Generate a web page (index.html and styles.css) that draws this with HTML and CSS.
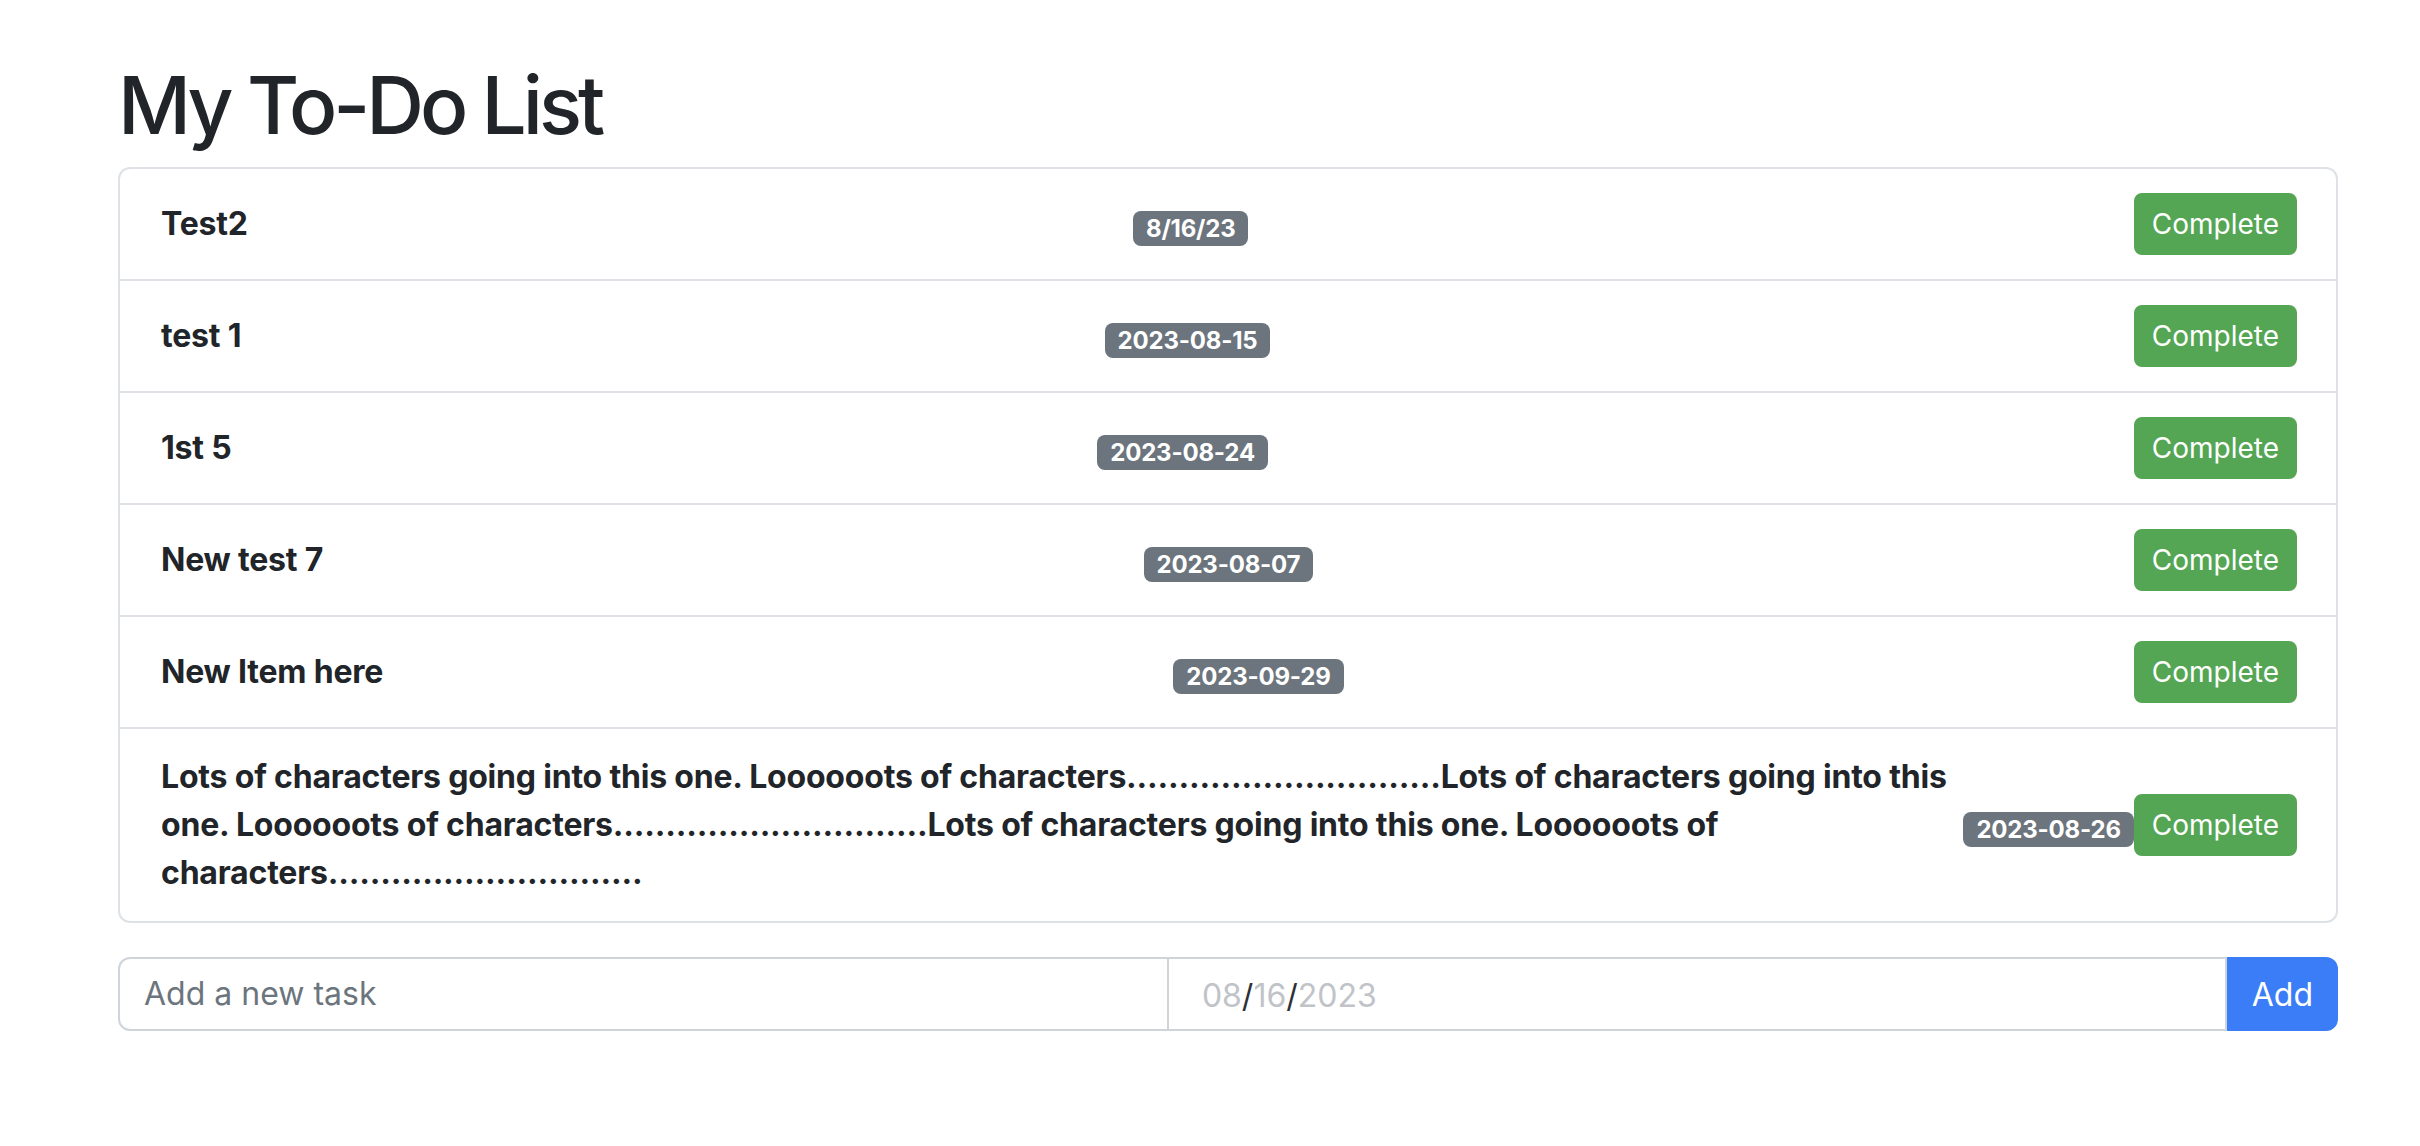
FILE: index.html
```html
<!DOCTYPE html>
<html lang="en">
<head>
<meta charset="utf-8">
<title>My To-Do List</title>
<link rel="stylesheet" href="styles.css">
</head>
<body>
<main class="page">
  <h1 class="title">My To-Do List</h1>
  <ul class="todo-list">
    <li class="todo-item">
      <span class="todo-text">Test2</span>
      <span class="due-badge">8/16/23</span>
      <button class="btn-complete" type="button">Complete</button>
    </li>
    <li class="todo-item">
      <span class="todo-text">test 1</span>
      <span class="due-badge">2023-08-15</span>
      <button class="btn-complete" type="button">Complete</button>
    </li>
    <li class="todo-item">
      <span class="todo-text">1st 5</span>
      <span class="due-badge">2023-08-24</span>
      <button class="btn-complete" type="button">Complete</button>
    </li>
    <li class="todo-item">
      <span class="todo-text">New test 7</span>
      <span class="due-badge">2023-08-07</span>
      <button class="btn-complete" type="button">Complete</button>
    </li>
    <li class="todo-item">
      <span class="todo-text">New Item here</span>
      <span class="due-badge">2023-09-29</span>
      <button class="btn-complete" type="button">Complete</button>
    </li>
    <li class="todo-item">
      <span class="todo-text">Lots of characters going into this one. Loooooots of characters..............................Lots of characters going into this one. Loooooots of characters..............................Lots of characters going into this one. Loooooots of characters..............................</span>
      <span class="due-badge">2023-08-26</span>
      <button class="btn-complete" type="button">Complete</button>
    </li>
  </ul>
  <form class="add-form">
    <input class="task-input" type="text" placeholder="Add a new task">
    <div class="date-field"><span class="date-part">08</span><span class="date-sep">/</span><span class="date-part">16</span><span class="date-sep">/</span><span class="date-part">2023</span></div>
    <button class="btn-add" type="button">Add</button>
  </form>
</main>
</body>
</html>
```

FILE: styles.css
```css
* { box-sizing: border-box; }

html, body {
  margin: 0;
  padding: 0;
  background: #ffffff;
}

body {
  font-family: Inter, "Noto Sans", "Liberation Sans", sans-serif;
  color: #212529;
}

.page {
  padding: 57px 82px 0 118px;
}

.title {
  margin: 0 0 14px 0;
  font-size: 80px;
  line-height: 96px;
  font-weight: 500;
  letter-spacing: -4px;
}

.todo-list {
  list-style: none;
  margin: 0;
  padding: 0;
  border: 2px solid #dee2e6;
  border-radius: 12px;
}

.todo-item {
  display: flex;
  justify-content: space-between;
  align-items: center;
  padding: 24px 39px 24px 41px;
  border-top: 2px solid #dee2e6;
}

.todo-item:first-child {
  border-top: 0;
}

.todo-text {
  font-size: 32px;
  line-height: 48px;
  font-weight: 700;
  letter-spacing: -0.2px;
  color: #212529;
}

.due-badge {
  flex: none;
  margin-top: 8px;
  background: #6c757d;
  color: #ffffff;
  font-size: 24px;
  font-weight: 700;
  line-height: 23px;
  letter-spacing: -0.2px;
  padding: 6px 13px;
  border-radius: 8px;
}

.btn-complete {
  flex: none;
  font-family: inherit;
  font-size: 28px;
  line-height: 42px;
  padding: 8px 16px;
  border: 2px solid #54a654;
  background: #54a654;
  color: #ffffff;
  border-radius: 8px;
}

.add-form {
  display: flex;
  margin-top: 34px;
  height: 74px;
}

.task-input {
  flex: 1 1 0;
  min-width: 0;
  font-family: inherit;
  font-size: 32px;
  line-height: 48px;
  padding: 12px 24px;
  border: 2px solid #ced4da;
  border-radius: 12px 0 0 12px;
  color: #212529;
  outline: none;
}

.task-input::placeholder {
  color: #6c757d;
}

.date-field {
  flex: 1 1 0;
  margin-left: -2px;
  border: 2px solid #ced4da;
  padding: 14px 24px 10px 33px;
  font-size: 32px;
  line-height: 46px;
}

.date-part {
  color: #c0c3c7;
}

.date-sep {
  color: #2d3136;
}

.btn-add {
  flex: none;
  font-family: inherit;
  font-size: 32px;
  line-height: 48px;
  padding: 12px 23px;
  border: 2px solid #3a7df6;
  background: #3a7df6;
  color: #ffffff;
  border-radius: 0 12px 12px 0;
}
```
